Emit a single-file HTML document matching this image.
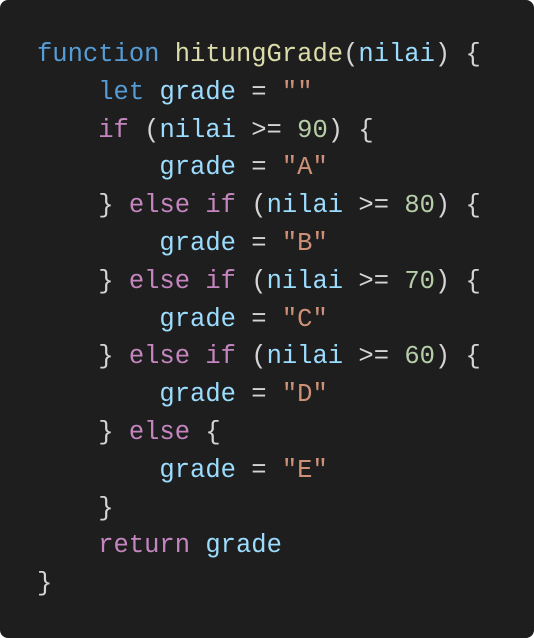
<!DOCTYPE html>
<html><head><style>
html,body{margin:0;padding:0;background:#fff;}
.box{width:534px;height:638px;background:#1e1e1e;border-radius:8px;box-sizing:border-box;padding:36px 0 0 37px;}
pre{margin:0;font-family:"Liberation Mono",monospace;font-size:25.5px;line-height:37.8px;color:#d4d4d4;}
.k{color:#569cd6}.f{color:#dcdcaa}.v{color:#9cdcfe}.c{color:#c586c0}.n{color:#b5cea8}.s{color:#ce9178}
</style></head><body><div class="box"><pre><span class="k">function</span> <span class="f">hitungGrade</span>(<span class="v">nilai</span>) {
    <span class="k">let</span> <span class="v">grade</span> = <span class="s">""</span>
    <span class="c">if</span> (<span class="v">nilai</span> &gt;= <span class="n">90</span>) {
        <span class="v">grade</span> = <span class="s">"A"</span>
    } <span class="c">else</span> <span class="c">if</span> (<span class="v">nilai</span> &gt;= <span class="n">80</span>) {
        <span class="v">grade</span> = <span class="s">"B"</span>
    } <span class="c">else</span> <span class="c">if</span> (<span class="v">nilai</span> &gt;= <span class="n">70</span>) {
        <span class="v">grade</span> = <span class="s">"C"</span>
    } <span class="c">else</span> <span class="c">if</span> (<span class="v">nilai</span> &gt;= <span class="n">60</span>) {
        <span class="v">grade</span> = <span class="s">"D"</span>
    } <span class="c">else</span> {
        <span class="v">grade</span> = <span class="s">"E"</span>
    }
    <span class="c">return</span> <span class="v">grade</span>
}</pre></div></body></html>
